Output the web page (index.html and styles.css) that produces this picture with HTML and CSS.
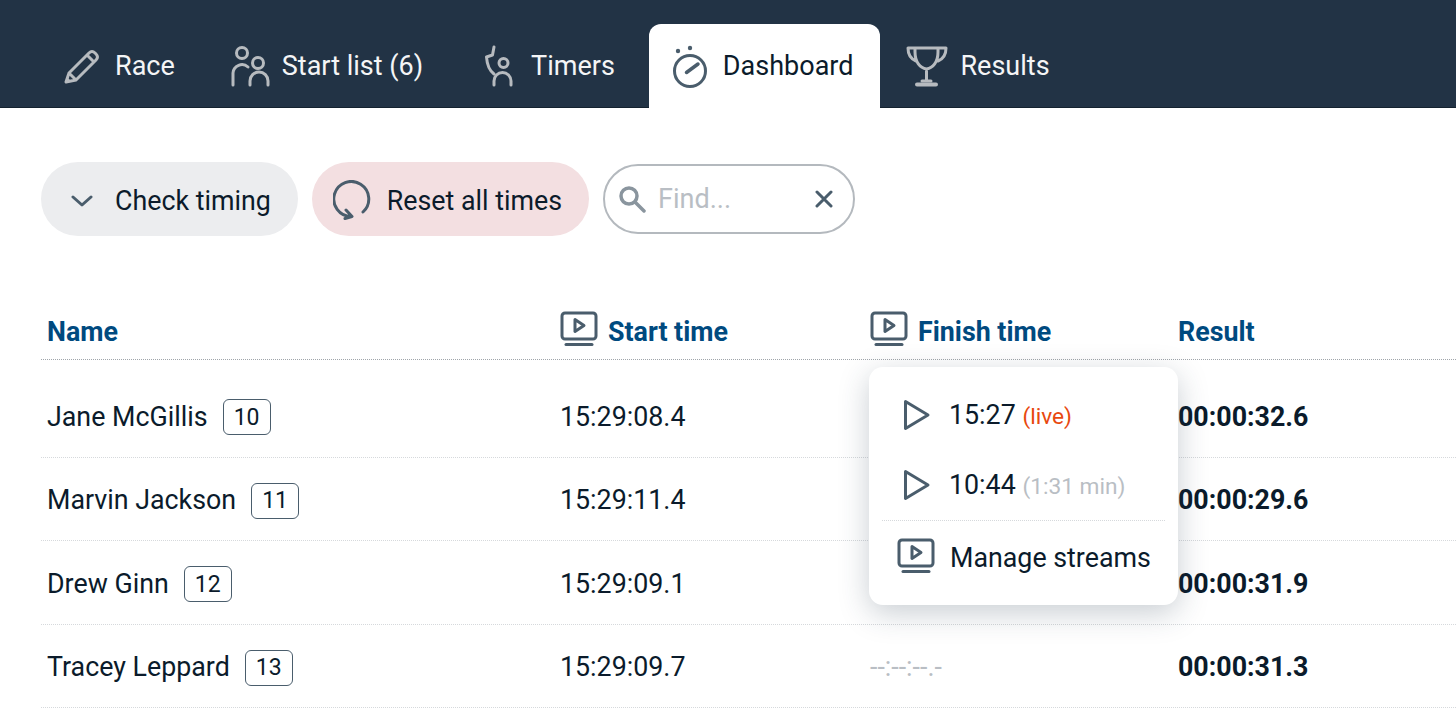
FILE: index.html
```html
<!DOCTYPE html>
<html lang="en">
<head>
    <meta charset="UTF-8">
    <meta name="viewport" content="width=device-width, initial-scale=1.0">
    <title>Dashboard</title>
    <link rel="stylesheet" href="styles.css">
</head>
<body>

    <nav class="tabs">
        <a class="tab tab-race">
            <span class="tab-icon">
                <svg width="44" height="44" viewBox="0 0 44 44"><path d="M7 38l3-9L30 9q3-3 6 0l1 1q3 3 0 6L17 36zM10 29l7 7M28 11l7 7"/><path class="solid" d="M6 39l2-6 4 4z"/></svg>
            </span>
            Race
        </a>
        <a class="tab tab-start">
            <span class="tab-icon">
                <svg width="44" height="44" viewBox="0 0 44 44"><circle cx="16" cy="9" r="5.5"/><path d="M7 41V29a9 9 0 0 1 15-6"/><circle cx="32" cy="19" r="5.5"/><path d="M24 41v-4a9 9 0 0 1 18 0v4"/></svg>
            </span>
            Start list (6)
        </a>
        <a class="tab tab-timers">
            <span class="tab-icon">
                <svg width="44" height="44" viewBox="0 0 44 44"><path d="M19 3l-1.500 8-6 2c.5 7 3.500 14 7.500 17"/><circle cx="28.500" cy="19" r="4.500"/><path d="M19 41v-4a8.500 8.500 0 0 1 17 0v4"/></svg>
            </span>
            Timers
        </a>
        <a class="tab active">
            <span class="tab-icon">
                <svg width="44" height="44" viewBox="0 0 44 44"><circle cx="22" cy="27" r="15.500"/><path class="hand" d="M18.500 28.500L30 20"/><circle class="solid" cx="10" cy="7" r="2.200"/><circle class="solid" cx="22" cy="4" r="2.200"/></svg>
            </span>
            Dashboard
        </a>
        <a class="tab tab-results">
            <span class="tab-icon">
                <svg width="44" height="44" viewBox="0 0 44 44"><path d="M11 4h23v4c0 10-5 16-11.500 17C16 24 11 18 11 8zM11 4H4c0 7 3 11 8 13M34 4h8c0 7-3 11-8 13M22.500 25v12M18 37h9"/><path class="thick" d="M13 40.500h19"/></svg>
            </span>
            Results
        </a>
    </nav>

    <main class="page">
        <div class="toolbar">
            <button class="pill pill-grey">
                <svg class="chevron" width="22" height="12" viewBox="0 0 22 12"><path d="M2 2l9 8 9-8"/></svg>
                <span class="pill-text">Check timing</span>
            </button>
            <button class="pill pill-red">
                <svg class="reset" width="38" height="40" viewBox="0 0 38 40"><path d="M30 32A17.500 17.500 0 1 0 18 36.500M13 30l6 6.500-7 2"/></svg>
                <span class="pill-text">Reset all times</span>
            </button>
            <div class="search">
                <svg class="search-icon" width="28" height="28" viewBox="0 0 28 28"><circle cx="11" cy="11" r="8"/><path d="M17 17l9 9"/></svg>
                <input class="search-input" type="text" placeholder="Find...">
                <svg class="search-clear" width="18" height="18" viewBox="0 0 18 18"><path d="M2 2l14 14M16 2L2 16"/></svg>
            </div>
        </div>

        <div class="row head">
            <div>Name</div>
            <div class="head-cell">
                <svg class="monitor" width="38" height="36" viewBox="0 0 38 36"><rect x="2" y="2" width="34" height="26" rx="3"/><path d="M15 8.500l9 6-9 6z"/><path d="M6 33.500h26"/></svg>
                Start time
            </div>
            <div class="head-cell">
                <svg class="monitor" width="38" height="36" viewBox="0 0 38 36"><rect x="2" y="2" width="34" height="26" rx="3"/><path d="M15 8.500l9 6-9 6z"/><path d="M6 33.500h26"/></svg>
                Finish time
            </div>
            <div>Result</div>
        </div>

        <div class="rows">
            <div class="row">
                <div class="name">Jane McGillis <span class="bib">10</span></div>
                <div>15:29:08.4</div>
                <div class="empty">--:--:--.-</div>
                <div class="result">00:00:32.6</div>
            </div>
            <div class="row">
                <div class="name">Marvin Jackson <span class="bib">11</span></div>
                <div>15:29:11.4</div>
                <div class="empty">--:--:--.-</div>
                <div class="result">00:00:29.6</div>
            </div>
            <div class="row">
                <div class="name">Drew Ginn <span class="bib">12</span></div>
                <div>15:29:09.1</div>
                <div class="empty">--:--:--.-</div>
                <div class="result">00:00:31.9</div>
            </div>
            <div class="row">
                <div class="name">Tracey Leppard <span class="bib">13</span></div>
                <div>15:29:09.7</div>
                <div class="empty">--:--:--.-</div>
                <div class="result">00:00:31.3</div>
            </div>
        </div>
    </main>

    <div class="menu">
        <div class="menu-item">
            <svg class="play" width="37" height="32" viewBox="0 0 37 32"><path d="M8.500 2.500L31 16 8.500 29.500z"/></svg>
            <span>15:27 <small class="live">(live)</small></span>
        </div>
        <div class="menu-item">
            <svg class="play" width="37" height="32" viewBox="0 0 37 32"><path d="M8.500 2.500L31 16 8.500 29.500z"/></svg>
            <span>10:44 <small class="length">(1:31 min)</small></span>
        </div>
        <div class="menu-line"></div>
        <div class="menu-item">
            <svg class="monitor" width="38" height="36" viewBox="0 0 38 36"><rect x="2" y="2" width="34" height="26" rx="3"/><path d="M15 8.500l9 6-9 6z"/><path d="M6 33.500h26"/></svg>
            <span class="menu-manage">Manage streams</span>
        </div>
    </div>

</body>
</html>
```

FILE: styles.css
```css
* {
    box-sizing: border-box;
}
body {
    margin: 0;
    height: 720px;
    overflow: hidden;
    background: white;
    color: #0b1b2b;
    font-family: Roboto, "Liberation Sans", sans-serif;
    font-size: 26.800px;
}
svg {
    flex-shrink: 0;
    fill: none;
    stroke-linecap: round;
    stroke-linejoin: round;
}

/* top tabs */
.tabs {
    display: flex;
    align-items: flex-end;
    height: 108px;
    padding-left: 40px;
    gap: 7px;
    background: #223345;
    border-bottom: 1px solid #14222f;
}
.tab {
    display: flex;
    align-items: center;
    height: 84px;
    margin-bottom: -1px;
    padding: 0 27px 0 23px;
    gap: 16px;
    border-radius: 12px 12px 0 0;
    color: #f4f5f6;
    font-size: 27px;
}
.tab.active {
    gap: 15px;
    background: white;
    color: #0b1b2b;
}
.tab-start {
    margin-left: -2px;
}
.tab-timers {
    margin-left: -1px;
}
.tab-results {
    margin-left: -2px;
}
.tab-icon {
    display: flex;
    justify-content: center;
    width: 36px;
    height: 44px;
}
.tab-icon svg {
    stroke: #b7bbbf;
    stroke-width: 3;
}
.tab.active svg {
    stroke: #4a5d6c;
}
.tab-icon .solid {
    fill: #b7bbbf;
    stroke: none;
}
.tab.active .solid {
    fill: #4a5d6c;
    stroke: none;
}
.tab-icon .thick {
    stroke-width: 4;
}
.tab-icon .hand {
    stroke-width: 3.500;
}

/* filter bar */
.page {
    padding: 54px 0 0 41px;
}
.toolbar {
    display: flex;
    align-items: center;
    gap: 14px;
    height: 74px;
}
.pill {
    display: flex;
    align-items: center;
    height: 74px;
    padding: 0 27px 0 30px;
    border: none;
    border-radius: 37px;
    color: #0b1b2b;
    font-family: inherit;
    font-size: 26.800px;
}
.pill-text {
    padding-top: 4px;
}
.pill-grey {
    gap: 22px;
    background: #ecedef;
}
.pill-red {
    gap: 16px;
    padding-left: 21px;
    padding-right: 27px;
    background: #f3dfe1;
}
.chevron {
    margin-top: 4px;
    stroke: #4a5d6c;
    stroke-width: 3;
}
.reset {
    margin-top: 2px;
    stroke: #4a5d6c;
    stroke-width: 3;
}
.search {
    display: flex;
    align-items: center;
    width: 252px;
    height: 70px;
    padding: 0 20px 0 13px;
    border: 2px solid #b4b9be;
    border-radius: 35px;
}
.search-icon {
    stroke: #8a959e;
    stroke-width: 3.500;
}
.search-input {
    width: 150px;
    height: 40px;
    margin: 0 0 0 12px;
    border: none;
    outline: none;
    padding: 0;
    background: none;
    font-family: inherit;
    font-size: 27px;
}
.search-input::placeholder {
    color: #b9bec4;
}
.search-clear {
    margin-left: auto;
    stroke: #4a5d6c;
    stroke-width: 3;
}

/* results table */
.row {
    display: grid;
    grid-template-columns: 513px 310px 308px 1fr;
    align-items: center;
    height: 83.500px;
    padding: 3px 0 0 6px;
    border-bottom: 1px dotted #d6d9dc;
}
.head {
    height: 74px;
    margin-top: 50px;
    padding-top: 18px;
    border-bottom-color: #a0a5aa;
    color: #004a7f;
    font-weight: 700;
}
.head-cell {
    display: flex;
    align-items: center;
    gap: 10px;
}
.head .monitor {
    margin-bottom: 6px;
}
.rows {
    padding-top: 14px;
}
.name {
    display: flex;
    align-items: center;
    gap: 15px;
}
.bib {
    display: flex;
    align-items: center;
    justify-content: center;
    width: 48px;
    height: 36px;
    margin-top: 1px;
    border: 1px solid #4a5d6c;
    border-radius: 6px;
    font-size: 23px;
}
.empty {
    color: #b9bec4;
}
.result {
    font-weight: 700;
}
.monitor {
    stroke: #4a5d6c;
    stroke-width: 3;
}

/* stream menu */
.menu {
    position: absolute;
    left: 869px;
    top: 367px;
    width: 309px;
    height: 238px;
    padding: 13px 13px;
    background: white;
    border-radius: 14px;
    box-shadow: 0 8px 30px rgba(40, 60, 80, 0.25);
}
.menu-item {
    display: flex;
    align-items: center;
    height: 70px;
    padding-left: 15px;
    gap: 15px;
    white-space: nowrap;
}
.menu-line {
    height: 1px;
    border-top: 1px dotted #d6d9dc;
}
.menu small {
    font-size: 22.700px;
}
.menu-manage {
    padding-top: 3px;
}
.play {
    stroke: #4a5d6c;
    stroke-width: 3;
}
.live {
    color: #e8490f;
}
.length {
    color: #b9bec4;
}
```
